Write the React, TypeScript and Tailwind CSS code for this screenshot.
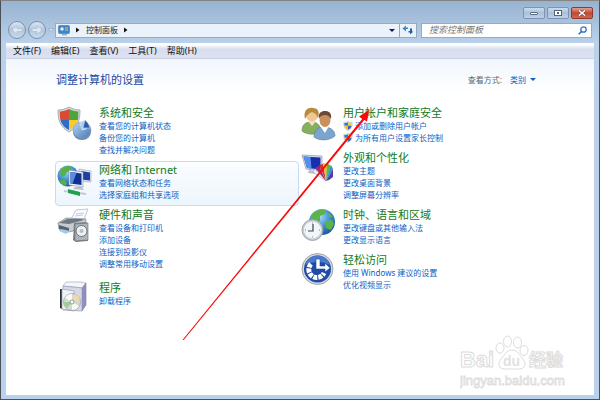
import React from "react";

function Shield() {
  return (
    <svg viewBox="0 0 20 22" className="h-full w-full" aria-hidden="true">
      <path d="M10 .5C13 2.500 16 3 19.500 3c.3 9-2 15-9.500 18.500C2.500 18 .2 12 .5 3 4 3 7 2.500 10 .5Z" fill="#dfe6ee" stroke="#8aa3c0" strokeWidth=".8" />
      <path d="M10 2.500v8H2.300C2 8.500 1.900 6.500 2 4.500c3-.1 5.500-.7 8-2Z" fill="#2f7bd0" />
      <path d="M10 2.500v8h7.700c.3-2 .4-4 .3-6-3-.1-5.500-.7-8-2Z" fill="#f7cf3c" />
      <path d="M10 10.500v9C5.500 17.500 3.200 14.500 2.300 10.500Z" fill="#f3bd2b" />
      <path d="M10 10.500v9c4.500-2 6.800-5 7.700-9Z" fill="#2666bb" />
    </svg>
  );
}

function SecurityIcon() {
  return (
    <svg viewBox="0 0 36 36" className="h-9 w-9" aria-hidden="true">
      <defs>
        <linearGradient id="pie" x1="0" y1="0" x2="1" y2="1">
          <stop offset="0" stopColor="#b9d6f2" />
          <stop offset="1" stopColor="#4777b4" />
        </linearGradient>
      </defs>
      <path d="M12 1c4 2 7 3 11 3 0 10-2 17-11 22C3 21 1 14 1 4c4 0 7-1 11-3Z" fill="#d5d8db" stroke="#9b9fa3" strokeWidth=".8" />
      <path d="M12 3v11H3.500C3 12 2.800 9.500 2.800 5.500 6 5.300 9 4.500 12 3Z" fill="#dc4a35" />
      <path d="M12 3v11h8.800c.4-2 .6-4.500.5-8.500C18 5.300 15 4.500 12 3Z" fill="#4ea53c" />
      <path d="M12 14v10C7 21.500 4.500 18 3.500 14Z" fill="#2f6cc6" />
      <path d="M12 14v10c5-2.500 7.800-6 8.800-10Z" fill="#f5cb2d" />
      <ellipse cx="25" cy="26" rx="9" ry="8" fill="#6a87ab" />
      <ellipse cx="25" cy="24" rx="9" ry="8" fill="url(#pie)" stroke="#7c9dc4" strokeWidth=".6" />
      <path d="M25 24l-2-7 5-3 1 9Z" fill="#a9cdf0" stroke="#e4f0fb" strokeWidth=".6" />
      <path d="M26 22l2-8c3 2 4 5 5 8Z" fill="#2f5ba4" stroke="#c4daf1" strokeWidth=".6" />
    </svg>
  );
}

function NetworkIcon() {
  return (
    <svg viewBox="0 0 36 36" className="h-9 w-9" aria-hidden="true">
      <defs>
        <radialGradient id="globe" cx=".4" cy=".3" r=".8">
          <stop offset="0" stopColor="#a9dcf7" />
          <stop offset=".5" stopColor="#3d8fd6" />
          <stop offset="1" stopColor="#124a94" />
        </radialGradient>
      </defs>
      <circle cx="11" cy="13" r="10.500" fill="url(#globe)" />
      <path d="M3 8c3-5 8-6 12-4l-1 4-4 1-2 4-4 1ZM3 17l5 0 2 4-2 2c-3-1-5-3-5-6Z" fill="#58b04a" />
      <path d="M22 6l12 2v11l-12-1Z" fill="#dfe4ec" stroke="#9ba6b8" strokeWidth=".6" />
      <path d="M24 8l9 1.500v8l-9-1Z" fill="#1b3fa5" />
      <path d="M12 7l14 2v15l-14-2Z" fill="#eef1f6" stroke="#8591a6" strokeWidth=".6" />
      <path d="M13.500 9l11 1.500v11.500l-11-1.500Z" fill="#122f92" />
      <path d="M13.500 9l6 .8-4 11-2-.3Z" fill="#5c8ce0" />
      <path d="M18 24l7 0 2 3-11-1Z" fill="#b8c0cc" />
      <path d="M7 28l22 3" stroke="#c3cad3" strokeWidth="2" />
      <path d="M11 26l12 3v4L11 30Z" fill="#22a04b" />
    </svg>
  );
}

function HardwareIcon() {
  return (
    <svg viewBox="0 0 36 36" className="h-9 w-9" aria-hidden="true">
      <path d="M14 11L19 2l12-1-5 13Z" fill="#fafcff" stroke="#a9b1ba" strokeWidth=".7" />
      <path d="M19 6l8-1M18 8l8-1" stroke="#a7c4e2" strokeWidth=".8" />
      <path d="M1 15l8-5 20 1-1 9-16 4-10-3Z" fill="#c7ccd2" stroke="#7b838c" strokeWidth=".7" />
      <path d="M2 15l10 1 15-4-2-1-15 0Z" fill="#6f7780" />
      <path d="M2 17l10 3v4L2 21Z" fill="#59616a" />
      <path d="M4 21l9 2-4 3-7-3Z" fill="#9dccf0" />
      <path d="M17 15l12-1 2 2v17l-12 1-3-2Z" fill="#7b8187" />
      <path d="M18 16l13-1v17l-13 1Z" fill="#aeb4ba" stroke="#676e75" strokeWidth=".6" />
      <circle cx="24.500" cy="23" r="5.500" fill="#eef1f4" stroke="#6b727a" strokeWidth="1" />
      <circle cx="24.500" cy="23" r="2" fill="#b5bbc1" />
    </svg>
  );
}

function ProgramsIcon() {
  return (
    <svg viewBox="0 0 36 36" className="h-9 w-9" aria-hidden="true">
      <path d="M6 5l3-4 14 0 6 1-3 5Z" fill="#f4f6f9" stroke="#a6a8c0" strokeWidth=".7" />
      <path d="M25 7l4-5v22l-4 6Z" fill="#8f8fc0" stroke="#8080ad" strokeWidth=".6" />
      <path d="M6 5l19 2v23L6 29Z" fill="#d6d8ea" stroke="#9a9dbb" strokeWidth=".7" />
      <path d="M3 8l2 0v20l-2-1Z" fill="#2d3338" />
      <path d="M5 8l12 2v20L5 28Z" fill="#f0f2f5" stroke="#9da4ae" strokeWidth=".7" />
      <circle cx="15" cy="21" r="8.500" fill="#d3d9d6" stroke="#8d9696" strokeWidth=".6" />
      <path d="M15 21L8 17a8 8 0 0 1 7-4ZM15 21l7 4a8 8 0 0 1-7 4Z" fill="#f6fbf4" />
      <path d="M15 21l-5 6a8 8 0 0 1-3-6Z" fill="#9ccf8b" />
      <path d="M15 21l3-8a8 8 0 0 1 5 6Z" fill="#efd9a6" />
      <circle cx="15" cy="21" r="2" fill="#fff" stroke="#7c8484" strokeWidth=".8" />
    </svg>
  );
}

function UsersIcon() {
  return (
    <svg viewBox="0 0 36 36" className="h-9 w-9" aria-hidden="true">
      <path d="M1 25c0-6 3-9 9-9s10 3 10 10c-6 3-14 3-19-1Z" fill="#86b05e" stroke="#5f8a3e" strokeWidth=".6" />
      <path d="M7 15l4 5 4-5Z" fill="#f4e3c8" />
      <circle cx="11" cy="9.500" r="6" fill="#f0c896" />
      <path d="M4 13c-2-9 3-12 8-11 5 0 7 4 5 10-1-3-3-5-6-6-3 1-5 3-7 7Z" fill="#b98a3e" />
      <path d="M13 31c0-7 4-10 10-10s11 3 11 9c-6 5-16 5-21 1Z" fill="#7ba5cd" stroke="#507ba8" strokeWidth=".6" />
      <path d="M19 20l5 7 4-7Z" fill="#fff" />
      <ellipse cx="24" cy="14" rx="5.500" ry="7" fill="#c98f5c" />
      <path d="M18 13c-1-6 2-8 6-8s7 2 6 8c-2-3-3-4-6-4s-5 1-6 4Z" fill="#6b4a33" />
    </svg>
  );
}

function AppearanceIcon() {
  return (
    <svg viewBox="0 0 36 36" className="h-9 w-9" aria-hidden="true">
      <path d="M1 4l20 1v15L5 18Z" fill="#dce1ea" stroke="#8e97a7" strokeWidth=".7" />
      <path d="M2.500 5.500l17 1v12L6 17Z" fill="#1a2fb0" />
      <path d="M2.500 5.500l7 .500 1 11.500L6 17Z" fill="#5590ea" />
      <path d="M8 19l6 1 2 3-9-1Z" fill="#b6bdc8" />
      <path d="M25 30L12 21l2-3Z" fill="#f3f3f3" stroke="#999" strokeWidth=".5" />
      <path d="M25 30L14 17l4-2Z" fill="#9c2b80" />
      <path d="M25 30l-7-16 4-1Z" fill="#d03030" />
      <path d="M25 30l-3-18 4 1Z" fill="#efb52c" />
      <path d="M25 30l1-18 4 3Z" fill="#62b346" />
      <path d="M25 30l5-16 2 4Z" fill="#338fd0" />
      <path d="M25 30l7-12 0 8-4 3Z" fill="#503da6" />
    </svg>
  );
}

function ClockIcon() {
  return (
    <svg viewBox="0 0 36 36" className="h-9 w-9" aria-hidden="true">
      <circle cx="21" cy="14" r="13" fill="url(#globe)" />
      <path d="M10 8c4-6 10-7 14-6l0 4-5 2 0 5-6 1ZM25 13l6-1 2 4-3 6-5-2ZM27 4l5 5-4 0Z" fill="#5cb446" />
      <circle cx="11.500" cy="22" r="10.500" fill="#c7cdd3" stroke="#8f979f" strokeWidth=".8" />
      <circle cx="11.500" cy="22" r="8.500" fill="#f3f6f9" />
      <path d="M12 16v7H7" stroke="#364352" strokeWidth="1.200" fill="none" />
      <path d="M11.500 14.500v1M19 22h-1M11.500 29.500v-1M4 22h1" stroke="#7c8791" />
    </svg>
  );
}

function EaseIcon() {
  return (
    <svg viewBox="0 0 36 36" className="h-9 w-9" aria-hidden="true">
      <circle cx="16.500" cy="16" r="15.500" fill="#d3d8e0" stroke="#8c94a1" strokeWidth=".8" />
      <circle cx="16.500" cy="16" r="13.500" fill="#1f4aa5" />
      <path d="M4 12a13 13 0 0 1 25 0c-8-4-17-4-25 0Z" fill="#4b7acb" />
      <path d="M10 11a8 8 0 1 0 13 9" fill="none" stroke="#fff" strokeWidth="5" strokeDasharray="4 1" />
      <path d="M15 6h4v7h5v-3l5 5-5 4v-3h-9Z" fill="#fff" stroke="#1f4aa5" strokeWidth=".6" />
    </svg>
  );
}

type Category = {
  title: string;
  icon: React.ReactNode;
  links: string[];
  shield?: boolean;
  active?: boolean;
};

const left: Category[] = [
  { title: "系统和安全", icon: <SecurityIcon />, links: ["查看您的计算机状态", "备份您的计算机", "查找并解决问题"] },
  { title: "网络和 Internet", icon: <NetworkIcon />, links: ["查看网络状态和任务", "选择家庭组和共享选项"], active: true },
  { title: "硬件和声音", icon: <HardwareIcon />, links: ["查看设备和打印机", "添加设备", "连接到投影仪", "调整常用移动设置"] },
  { title: "程序", icon: <ProgramsIcon />, links: ["卸载程序"] },
];

const right: Category[] = [
  { title: "用户帐户和家庭安全", icon: <UsersIcon />, links: ["添加或删除用户帐户", "为所有用户设置家长控制"], shield: true },
  { title: "外观和个性化", icon: <AppearanceIcon />, links: ["更改主题", "更改桌面背景", "调整屏幕分辨率"] },
  { title: "时钟、语言和区域", icon: <ClockIcon />, links: ["更改键盘或其他输入法", "更改显示语言"] },
  { title: "轻松访问", icon: <EaseIcon />, links: ["使用 Windows 建议的设置", "优化视频显示"] },
];

function CategoryItem({ title, icon, links, shield, active }: Category) {
  return (
    <section
      className={`flex gap-[6px] rounded-sm border pb-1 pl-px ${links.length > 3 ? "mb-1" : ""} ${
        active ? "border-[#c3dcf0] bg-linear-to-b from-[#fbfdff] to-[#edf5fd]" : "border-transparent"
      }`}
    >
      <div className="w-9 shrink-0 pt-px">{icon}</div>
      <div className="min-w-0">
        <h2 className="text-[11px] leading-[15px] text-[#117a1b]">
          <a href="#">{title}</a>
        </h2>
        <ul className="text-[8px] leading-3 text-[#0b5fc4]">
          {links.map((link) => (
            <li key={link}>
              <a href="#" className="flex items-center gap-[2px]">
                {shield && <span className="h-[10px] w-[10px]"><Shield /></span>}
                {link}
              </a>
            </li>
          ))}
        </ul>
      </div>
    </section>
  );
}

function WindowButtons() {
  const base = "flex h-3 w-[22px] items-center justify-center rounded-[2px] border";
  return (
    <div className="flex gap-[2px]">
      <button aria-label="最小化" className={`${base} border-[#7f93ad] bg-linear-to-b from-[#cbdcee] via-[#a8c0da] to-[#bdd3ea]`}>
        <span className="h-[3px] w-2 rounded-[1px] border border-[#5f6c7e] bg-white" />
      </button>
      <button aria-label="最大化" className={`${base} border-[#7f93ad] bg-linear-to-b from-[#cbdcee] via-[#a8c0da] to-[#bdd3ea]`}>
        <svg viewBox="0 0 8 6" className="h-[6px] w-2">
          <rect x=".5" y=".5" width="7" height="5" fill="#fff" stroke="#56647a" />
          <rect x="3" y="2" width="2" height="2" fill="#56647a" />
        </svg>
      </button>
      <button aria-label="关闭" className={`${base} border-[#8b3b32] bg-linear-to-b from-[#e0a093] via-[#c4452f] to-[#d0694f]`}>
        <svg viewBox="0 0 8 6" className="h-[6px] w-2">
          <path d="M1 .5l6 5M7 .5l-6 5" stroke="#6d3430" strokeWidth="2.600" />
          <path d="M1 .5l6 5M7 .5l-6 5" stroke="#fff" strokeWidth="1.600" />
        </svg>
      </button>
    </div>
  );
}

function NavButtons() {
  return (
    <div className="flex w-[47px] shrink-0 items-center">
      {["后退", "前进"].map((label, i) => (
        <button
          key={label}
          aria-label={label}
          className="mr-[2px] flex h-[18px] w-[18px] shrink-0 items-center justify-center rounded-full border border-[#7d90a8] bg-linear-to-b from-[#dbe6f2] via-[#b4c6db] to-[#c8daed]"
        >
          <svg viewBox="0 0 12 12" className={`h-3 w-3 ${i ? "rotate-180" : ""}`}>
            <path d="M1 6l5-4.500v3h5v3H6v3Z" fill="#dbe8f5" stroke="#a7bacf" strokeWidth=".6" />
          </svg>
        </button>
      ))}
      <svg viewBox="0 0 6 4" className="h-1 w-[6px] shrink-0">
        <path d="M.5.5h5L3 3.500Z" fill="#dfe9f4" stroke="#8ba0ba" strokeWidth=".6" />
      </svg>
    </div>
  );
}

function Crumb() {
  return (
    <svg viewBox="0 0 4 6" className="h-[6px] w-1">
      <path d="M0 .5l3.500 2.500L0 5.500Z" fill="#111" />
    </svg>
  );
}

function AddressBar() {
  return (
    <div className="flex items-center px-[7px]">
      <NavButtons />
      <div className="flex h-[15px] min-w-0 flex-1 border border-[#9aa9bb] bg-[#ebf2fa]">
        <div className="flex flex-1 items-center gap-[6px] pl-[2px] pr-1">
          <svg viewBox="0 0 12 11" className="h-[11px] w-3">
            <rect x=".5" y=".5" width="11" height="8" rx="1" fill="#3a86cf" stroke="#6e8fb2" />
            <circle cx="4" cy="4" r="1.800" fill="#d8eefc" />
            <path d="M7 3h3M7 5h3" stroke="#f5b93c" />
            <path d="M4 9h5v1.500H4Z" fill="#9fb3c9" />
          </svg>
          <Crumb />
          <span className="text-[8px] text-[#222]">控制面板</span>
          <Crumb />
          <svg viewBox="0 0 6 3" className="ml-auto h-[3px] w-[6px]">
            <path d="M0 0h6L3 3Z" fill="#15155c" />
          </svg>
        </div>
        <button aria-label="刷新" className="flex w-[17px] items-center justify-center border-l border-[#9aa9bb]">
          <svg viewBox="0 0 12 10" className="h-[10px] w-3">
            <path d="M.5 3.500L4 .5v2h2V4H4v2.500Z" fill="#2e8bdc" />
            <path d="M11.500 6.500L8 9.500v-2H6.500V6H8V3.500h2v3Z" fill="#1a5fb4" />
          </svg>
        </button>
      </div>
      <label className="ml-1 flex h-[15px] w-[171px] items-center border border-[#9aa9bb] bg-white pl-[7px] pr-1">
        <input
          type="search"
          aria-label="搜索控制面板"
          placeholder="搜索控制面板"
          className="min-w-0 flex-1 text-[9px] italic leading-3 outline-none placeholder:text-[#777]"
        />
        <svg viewBox="0 0 9 9" className="h-[9px] w-[9px]">
          <circle cx="5.500" cy="3.500" r="2.700" fill="none" stroke="#2c72bd" strokeWidth="1.300" />
          <path d="M3.500 5.500L.7 8.300" stroke="#2c72bd" strokeWidth="1.600" />
        </svg>
      </label>
    </div>
  );
}

function Watermark() {
  return (
    <svg viewBox="0 0 110 56" className="absolute bottom-2 right-[29px] h-[56px] w-[110px]" aria-hidden="true">
      <g fill="#fff" stroke="#dcdcdc" strokeWidth="1">
        <text x="0" y="32" fontSize="22" fontWeight="bold" fontFamily="Liberation Sans, sans-serif">Bai</text>
        <text x="69" y="31" fontSize="17" fontWeight="bold" fontFamily="Noto Sans CJK SC, sans-serif">经验</text>
        <text x="0" y="50" fontSize="13" strokeWidth=".8" fontFamily="Liberation Sans, sans-serif">jingyan.baidu.com</text>
        <ellipse cx="40" cy="13" rx="4" ry="5" />
        <ellipse cx="47.500" cy="6.500" rx="4" ry="5.500" />
        <ellipse cx="57.500" cy="7.500" rx="4" ry="5.500" />
        <ellipse cx="64" cy="15.500" rx="4" ry="5" />
        <path d="M52 15c6 0 7 5 11 9 4 5 2 10-4 10H45c-6 0-8-5-4-10 4-4 5-9 11-9Z" />
        <text x="43" y="31" fontSize="14" fontWeight="bold" fill="#e2e2e2" stroke="none" fontFamily="Liberation Sans, sans-serif">du</text>
      </g>
    </svg>
  );
}

export default function App() {
  return (
    <div className="relative flex min-h-screen flex-col border border-b-[#0f6d7b] border-l-[#4a5058] border-r-[#0f6d7b] border-t-[#858585] bg-[#b9d1ea] font-['Noto_Sans','Noto_Sans_CJK_SC',sans-serif]">
      <header className="bg-linear-to-b from-[#98b3d1] to-[#b9d1ea] pb-1">
        <div className="flex h-5 items-start justify-end pr-[6px] pt-[6px]">
          <WindowButtons />
        </div>
        <AddressBar />
      </header>
      <main className="mx-[5px] mb-1 flex flex-1 flex-col bg-white">
        <nav className="flex h-4 items-center gap-[10px] border-b border-[#c9cfe0] bg-linear-to-b from-white from-10% via-[#d9deef] via-40% to-[#dde2f2] pl-[7px] text-[9px] leading-3 text-[#111]">
          {["文件(F)", "编辑(E)", "查看(V)", "工具(T)", "帮助(H)"].map((item) => (
            <button key={item}>{item}</button>
          ))}
        </nav>
        <div className="flex-1 bg-linear-to-b from-[#f1f6fc] to-white to-10% px-[49px]">
          <div className="flex h-[45px] items-center justify-between pb-1">
            <h1 className="pl-px text-[11px] leading-4 text-[#1c46a0]">调整计算机的设置</h1>
            <div className="flex items-center gap-2 pr-[9px] text-[8px]">
              <span className="text-[#5c6670]">查看方式:</span>
              <button className="flex items-center gap-1 text-[#0b5fc4]">
                类别
                <svg viewBox="0 0 6 3" className="h-[3px] w-[6px]">
                  <path d="M0 0h6L3 3Z" fill="#0b5fc4" />
                </svg>
              </button>
            </div>
          </div>
          <div className="grid max-w-[488px] grid-cols-2">
            <div>{left.map((c) => <CategoryItem key={c.title} {...c} />)}</div>
            <div>{right.map((c) => <CategoryItem key={c.title} {...c} />)}</div>
          </div>
        </div>
      </main>
      <Watermark />
      <svg viewBox="0 0 190 232" className="pointer-events-none absolute left-[181px] top-[109px] h-[232px] w-[190px]" aria-hidden="true">
        <path d="M.5 230L180.200 9l-3.200-2.500L187 0l-2 11.500-2.800-1.500L1.700 230Z" fill="#fb0808" />
      </svg>
    </div>
  );
}
